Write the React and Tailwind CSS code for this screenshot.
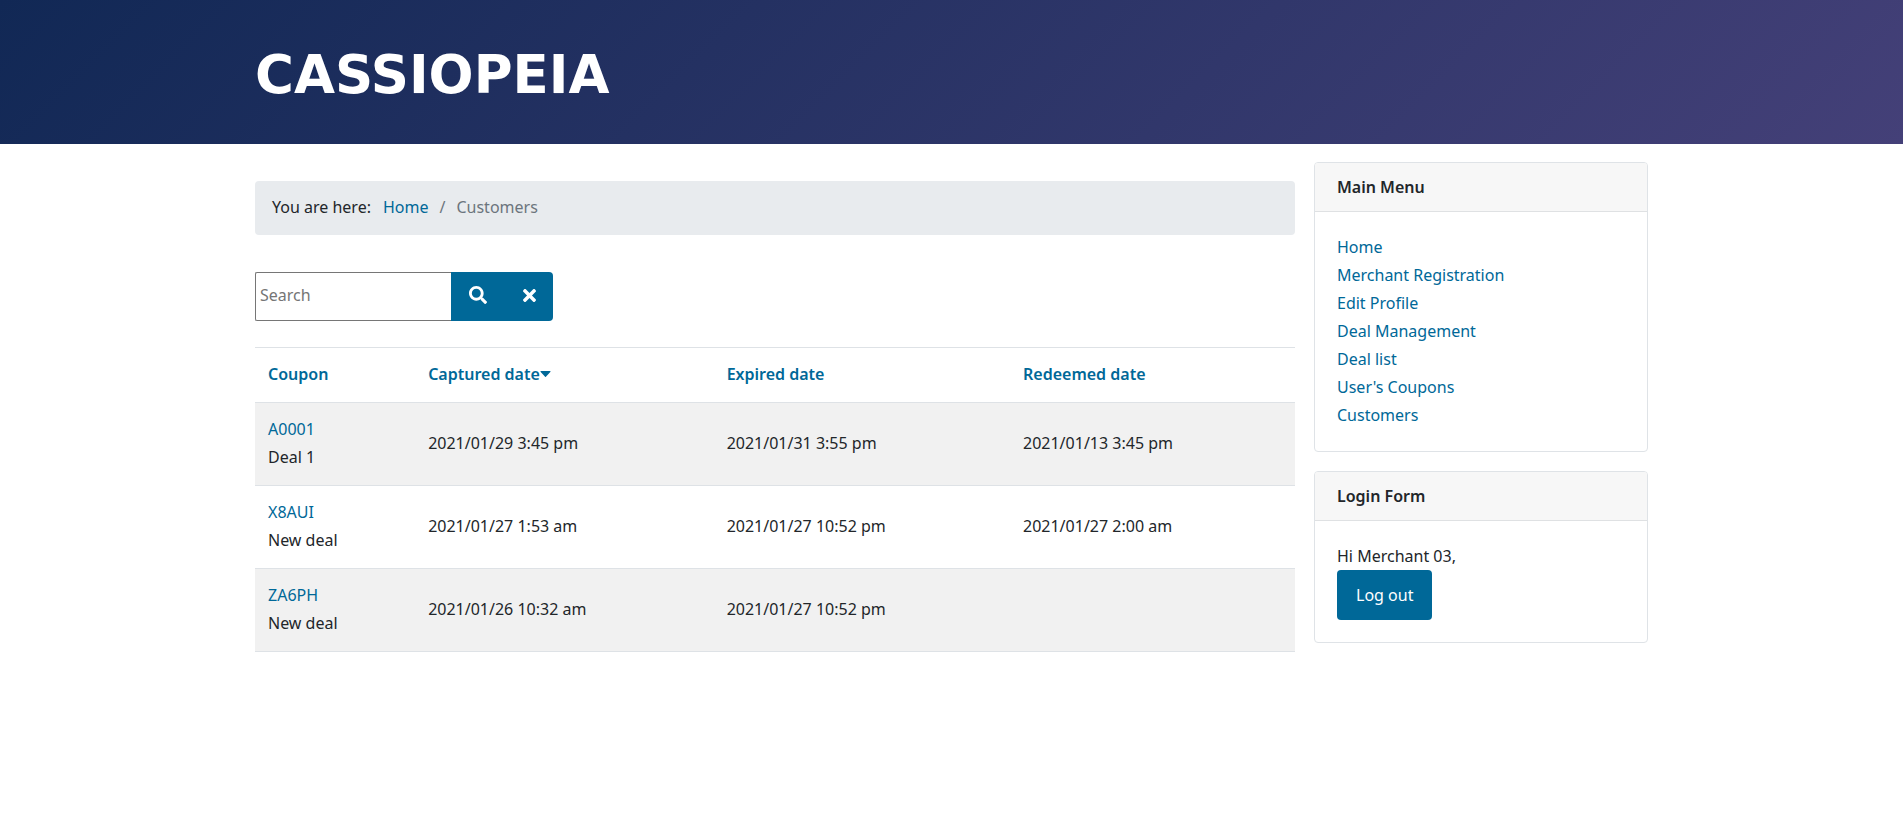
const menu = [
  "Home",
  "Merchant Registration",
  "Edit Profile",
  "Deal Management",
  "Deal list",
  "User's Coupons",
  "Customers",
];

const coupons = [
  { code: "A0001", deal: "Deal 1", captured: "2021/01/29 3:45 pm", expired: "2021/01/31 3:55 pm", redeemed: "2021/01/13 3:45 pm" },
  { code: "X8AUI", deal: "New deal", captured: "2021/01/27 1:53 am", expired: "2021/01/27 10:52 pm", redeemed: "2021/01/27 2:00 am" },
  { code: "ZA6PH", deal: "New deal", captured: "2021/01/26 10:32 am", expired: "2021/01/27 10:52 pm", redeemed: "" },
];

function SearchIcon() {
  return (
    <svg viewBox="0 0 512 512" className="size-[18px]" fill="currentColor" aria-hidden="true">
      <path d="M505 442.7L405.3 343c-4.5-4.5-10.6-7-17-7H372c27.6-35.3 44-79.7 44-128C416 93.1 322.9 0 208 0S0 93.1 0 208s93.1 208 208 208c48.3 0 92.7-16.4 128-44v16.3c0 6.4 2.5 12.5 7 17l99.7 99.7c9.4 9.4 24.6 9.4 33.9 0l28.3-28.3c9.4-9.4 9.4-24.6.1-34zM208 336c-70.7 0-128-57.2-128-128 0-70.7 57.2-128 128-128 70.7 0 128 57.2 128 128 0 70.7-57.2 128-128 128z" />
    </svg>
  );
}

function TimesIcon() {
  return (
    <svg viewBox="0 80 352 352" className="size-[13px]" fill="currentColor" aria-hidden="true">
      <path d="M242.72 256l100.07-100.07c12.28-12.28 12.28-32.19 0-44.48l-22.24-22.24c-12.28-12.28-32.19-12.28-44.48 0L176 189.28 75.93 89.21c-12.28-12.28-32.19-12.28-44.48 0L9.21 111.45c-12.28 12.28-12.28 32.19 0 44.48L109.28 256 9.21 356.07c-12.28 12.28-12.28 32.19 0 44.48l22.24 22.24c12.28 12.28 32.2 12.28 44.48 0L176 322.72l100.07 100.07c12.28 12.28 32.2 12.28 44.48 0l22.24-22.24c12.28-12.28 12.28-32.19 0-44.48L242.72 256z" />
    </svg>
  );
}

function Card({ title, children }) {
  return (
    <section className="overflow-hidden rounded border border-[#dfe3e7] bg-white">
      <h3 className="border-b border-[#dfe1e3] bg-[#f7f7f7] px-[22px] py-[10px] font-semibold">{title}</h3>
      <div className="px-[22px] pt-[21px] pb-[22px]">{children}</div>
    </section>
  );
}

export default function App() {
  return (
    <div className="min-h-screen bg-white font-['Noto_Sans',sans-serif] text-[16px] leading-[28px] text-[#22262a]">
      <header className="bg-linear-[135deg] from-[#112855] to-[#444078]">
        <div className="mx-auto flex h-36 max-w-[1393px] items-center pt-[6px]">
          <a href="#" className="font-['DejaVu_Sans',sans-serif] text-[53px] leading-[64px] font-bold text-white">
            CASSIOPEIA
          </a>
        </div>
      </header>

      <div className="mx-auto grid max-w-[1393px] grid-cols-4 items-start gap-[19px]">
        <main className="col-span-3 pt-[37px]">
          <nav aria-label="Breadcrumbs" className="rounded bg-[#e8ebee] px-[17px] pt-3 pb-[14px]">
            <ol className="flex">
              <li className="pr-3">You are here:</li>
              <li><a href="#" className="text-[#006898]">Home</a></li>
              <li className="px-[11px] text-[#6c757d]">/</li>
              <li className="text-[#6c757d]">Customers</li>
            </ol>
          </nav>

          <form className="mt-[37px] flex h-[49px]">
            <input
              type="text"
              aria-label="Search"
              placeholder="Search"
              className="w-[196px] rounded-l-[2px] border border-r-0 border-[#767676] px-1 pb-[3px] placeholder:text-[#757575]"
            />
            <button type="button" aria-label="Search" className="flex w-[54px] items-center justify-center bg-[#006898] pb-[3px] text-white">
              <SearchIcon />
            </button>
            <button type="button" aria-label="Clear" className="flex w-12 items-center justify-center rounded-r bg-[#006898] pb-[3px] text-white">
              <TimesIcon />
            </button>
          </form>

          <table className="mt-[26px] w-full table-fixed border-collapse text-left">
            <colgroup>
              <col className="w-[15.4%]" />
              <col className="w-[28.7%]" />
              <col className="w-[28.5%]" />
              <col />
            </colgroup>
            <thead>
              <tr className="border-y border-[#dee2e6] text-[#006898]">
                <th className="px-[13px] pt-3 pb-[14px] font-semibold"><a href="#">Coupon</a></th>
                <th className="px-[13px] pt-3 pb-[14px] font-semibold">
                  <a href="#" className="flex items-center">
                    Captured date
                    <svg viewBox="0 0 10 6" className="h-[6px] w-[11px]" fill="currentColor" aria-hidden="true">
                      <path d="M.6 0h8.8c.5 0 .8.6.4 1L5.4 5.7c-.2.3-.6.3-.8 0L.2 1C-.2.6.1 0 .6 0z" />
                    </svg>
                  </a>
                </th>
                <th className="px-[13px] pt-3 pb-[14px] font-semibold"><a href="#">Expired date</a></th>
                <th className="px-[13px] pt-3 pb-[14px] font-semibold"><a href="#">Redeemed date</a></th>
              </tr>
            </thead>
            <tbody>
              {coupons.map((c) => (
                <tr key={c.code} className="border-b border-[#dee2e6] odd:bg-[#f1f1f1]">
                  <td className="px-[13px] pt-3 pb-[14px]">
                    <a href="#" className="block text-[#006898]">{c.code}</a>
                    {c.deal}
                  </td>
                  <td className="px-[13px] pt-3 pb-[14px]">{c.captured}</td>
                  <td className="px-[13px] pt-3 pb-[14px]">{c.expired}</td>
                  <td className="px-[13px] pt-3 pb-[14px]">{c.redeemed}</td>
                </tr>
              ))}
            </tbody>
          </table>
        </main>

        <aside className="flex flex-col gap-[19px] pt-[18px]">
          <Card title="Main Menu">
            <ul>
              {menu.map((m) => (
                <li key={m}><a href="#" className="text-[#006898]">{m}</a></li>
              ))}
            </ul>
          </Card>
          <Card title="Login Form">
            <p>Hi Merchant 03,</p>
            <button type="button" className="rounded bg-[#006898] px-[19px] py-[11px] text-white">Log out</button>
          </Card>
        </aside>
      </div>
    </div>
  );
}
